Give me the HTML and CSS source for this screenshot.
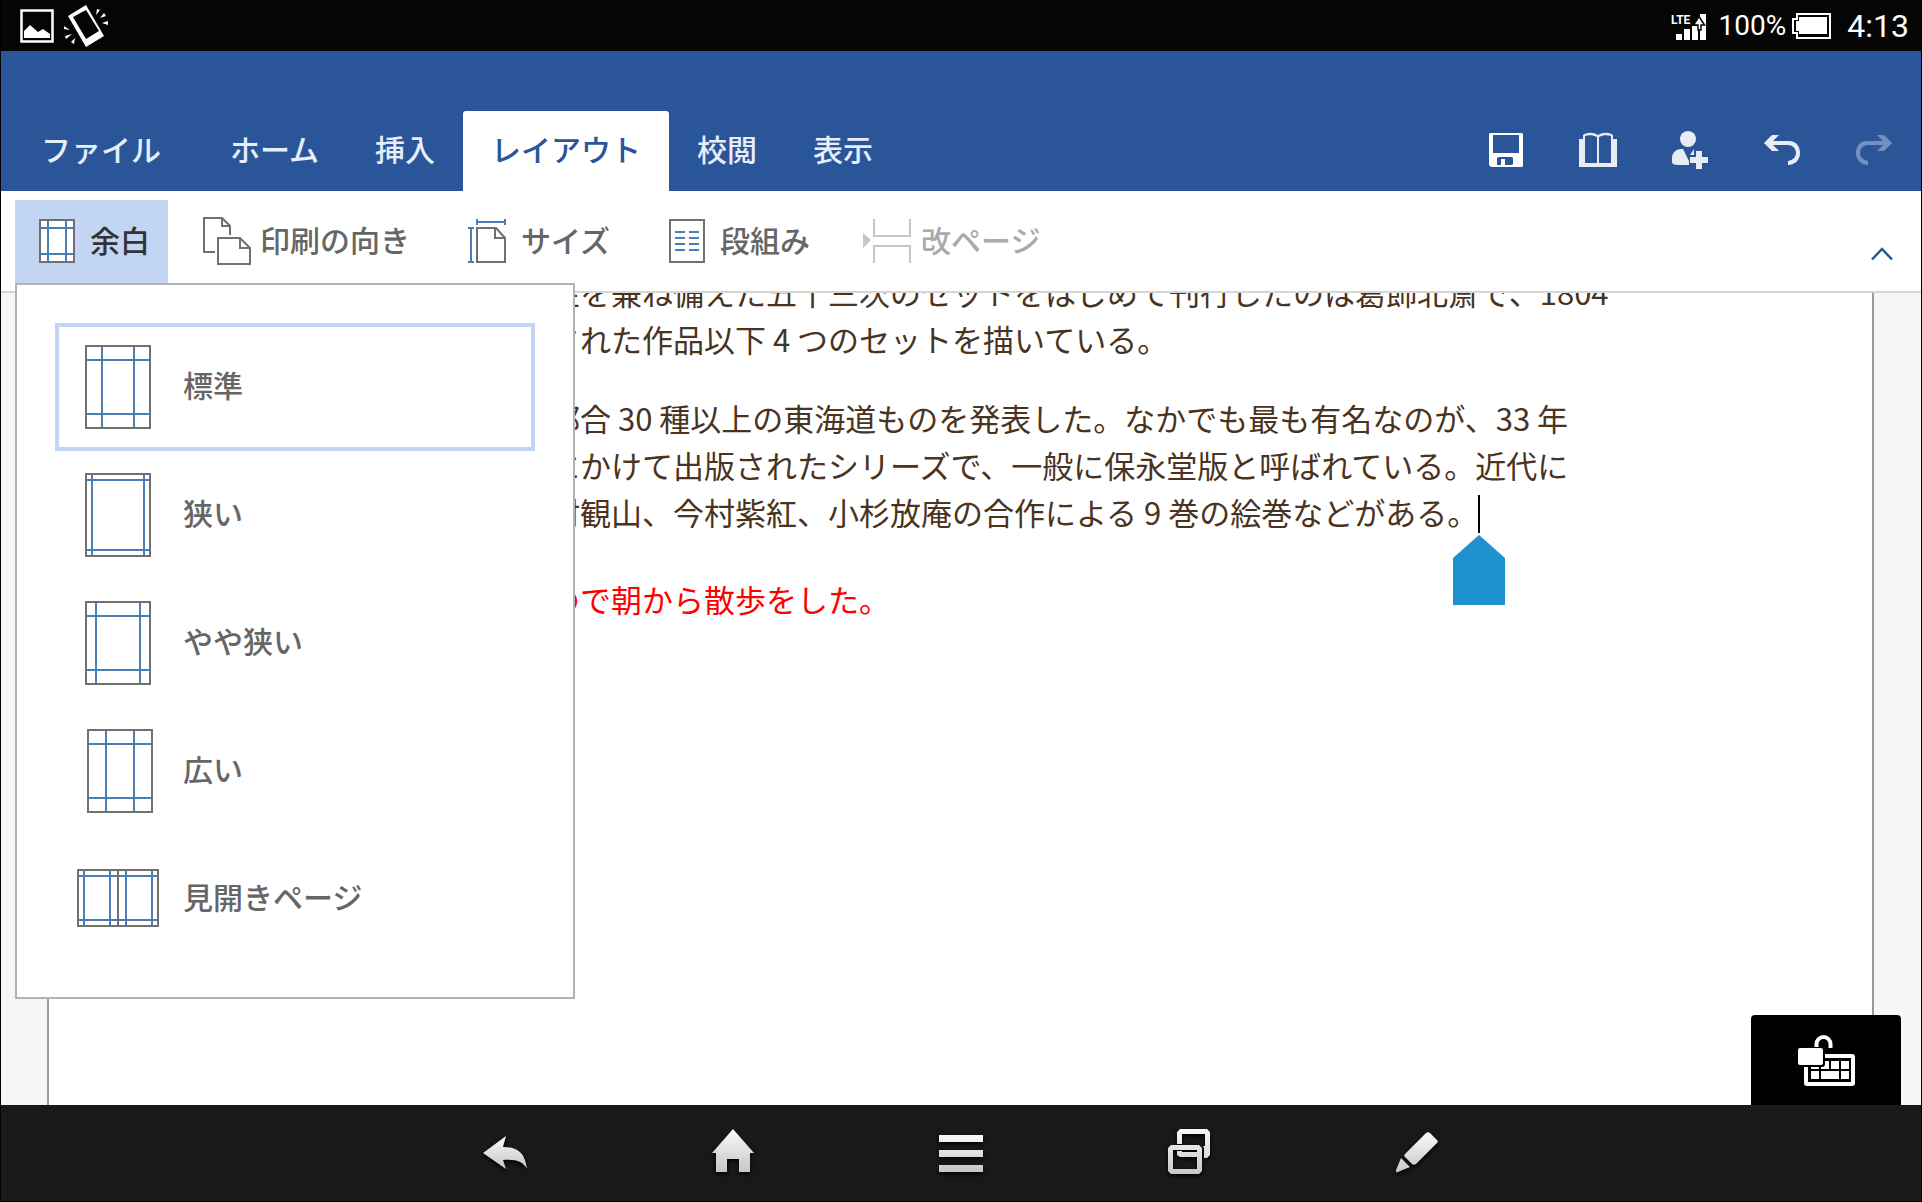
FILE: index.html
```html
<!DOCTYPE html>
<html lang="ja">
<head>
<meta charset="utf-8">
<meta name="viewport" content="width=device-width, initial-scale=1">
<title>レイアウト</title>
<link rel="stylesheet" href="styles.css">
</head>
<body>
<div class="status">
  <div class="status-group">
    <svg width="34" height="34" viewBox="0 0 34 34"><path d="M1.500 1.500h31v31h-31z" fill="none" stroke="#fff" stroke-width="2.500"/><path d="M4 29v-7l6-6 8 7 5-3 7 5v4z" fill="#fff"/></svg>
    <svg width="44" height="42" viewBox="0 0 44 42"><path d="M4 11 22 0l18 31-18 11zM9 12l13 22 13-8L22 5z" fill="#fff" fill-rule="evenodd"/><path d="M32 10l1-6 3 1zM36 13l4-5 2 3zM38 18l6-2v4zM6 25l-6-1v-3zM8 29l-6 5-1-3zM11 33l-1 6-3-2z" fill="#fff"/></svg>
  </div>
  <div class="status-group status-right">
    <svg class="signal" width="36" height="28" viewBox="0 0 36 28"><path d="M5 22h6v6H5zM13 17h6v11h-6zM21 14h6v14h-6zM29 2h6v26h-6z" fill="#fff"/><path d="M22.500 13 28 4.500l5.500 8.500h-3.500v5h-3v-5z" fill="#fff" stroke="#050505" stroke-width="1.500"/><text x="0" y="12" class="lte">LTE</text></svg>
    <span class="percent">100%</span>
    <svg class="battery" width="39" height="26" viewBox="0 0 39 26"><path d="M5 1h33v24H5v-5H1V6h4z" fill="none" stroke="#fff" stroke-width="2"/><path d="M7 4h28v17H7v-3H4V8h3z" fill="#fff"/></svg>
    <span class="clock">4:13</span>
  </div>
</div>

<header class="header">
  <nav class="tabs">
    <button class="tab tab-file">ファイル</button>
    <button class="tab">ホーム</button>
    <button class="tab">挿入</button>
    <button class="tab tab-active">レイアウト</button>
    <button class="tab">校閲</button>
    <button class="tab">表示</button>
  </nav>
  <div class="actions">
    <button class="action" aria-label="保存"><svg width="34" height="34" viewBox="0 0 34 34"><path fill="#fff" fill-rule="evenodd" d="M1 0h32l1 1v32l-1 1H2l-2-2V1zM4 2v18h26V2zM10 24l-2 1v7h4v-6h4v6h7l1-1v-6l-1-1z"/></svg></button>
    <button class="action" aria-label="閲覧"><svg width="38" height="34" viewBox="0 0 38 34"><path fill="#e8edf5" fill-rule="evenodd" d="M0 6h4V2c4-3 10-3 15 0 5-3 11-3 15 0v4h4v28H0zM6 3v27h12V4c-4-2-8-2-12-1zM20 4v26h12V3c-4-1-8-1-12 1z"/></svg></button>
    <button class="action" aria-label="共有"><svg width="36" height="38" viewBox="0 0 36 38"><g fill="#e8edf5"><circle cx="16" cy="8" r="8"/><path d="M9 18h2l6 12v4H6c-4 0-6-1-6-3v-4c0-5 4-9 9-9zM22 18l-4 6h4z"/><path d="M24 20h6v6h6v6h-6v6h-6v-6h-6v-6h6z"/></g></svg></button>
    <button class="action" aria-label="元に戻す"><svg width="36" height="30" viewBox="0 0 36 30"><path fill="#e8edf5" d="M0 8 8 0h7L9 6h16c7 0 11 5 11 12s-5 12-12 12v-4c5-1 8-4 8-8s-3-8-8-8H9l6 6H8z"/></svg></button>
    <button class="action" aria-label="やり直し" disabled><svg width="36" height="30" viewBox="0 0 36 30"><path fill="#7391bd" d="M36 8 28 0h-7l6 6H11C4 6 0 11 0 18s5 12 12 12v-4c-5-1-8-4-8-8s3-8 8-8h15l-6 6h7z"/></svg></button>
  </div>
</header>

<div class="ribbon">
  <div class="menu-anchor">
    <button class="tool tool-open" aria-expanded="true">
      <svg width="36" height="44" viewBox="0 0 36 44"><path fill="#fff" d="M0 0h36v44H0z"/><path class="guide" d="M9 1v42M27 1v42M1 9h34M1 35h34"/><path class="edge" d="M1 1h34v42H1z"/></svg>
      <span class="label">余白</span>
    </button>
    <div class="menu">
      <button class="choice choice-current"><span class="choice-icon"><svg width="66" height="84" viewBox="0 0 66 84"><path class="guide" d="M17 1v82M49 1v82M1 15h64M1 69h64"/><path class="edge" d="M1 1h64v82H1z"/></svg></span><span class="label">標準</span></button>
      <button class="choice"><span class="choice-icon"><svg width="66" height="84" viewBox="0 0 66 84"><path class="guide" d="M7 1v82M59 1v82M1 7h64M1 77h64"/><path class="edge" d="M1 1h64v82H1z"/></svg></span><span class="label">狭い</span></button>
      <button class="choice"><span class="choice-icon"><svg width="66" height="84" viewBox="0 0 66 84"><path class="guide" d="M11 1v82M55 1v82M1 15h64M1 69h64"/><path class="edge" d="M1 1h64v82H1z"/></svg></span><span class="label">やや狭い</span></button>
      <button class="choice"><span class="choice-icon"><svg width="70" height="84" viewBox="0 0 70 84"><path class="guide" d="M23 1v82M51 1v82M5 15h64M5 69h64"/><path class="edge" d="M5 1h64v82H5z"/></svg></span><span class="label">広い</span></button>
      <button class="choice"><span class="choice-icon"><svg width="82" height="60" viewBox="0 0 82 60"><path class="guide" d="M7 1v56M33 1v56M49 1v56M75 1v56M1 7h80M1 51h80"/><path class="edge" d="M41 1v56M1 1h80v56H1z"/></svg></span><span class="label">見開きページ</span></button>
    </div>
  </div>
  <button class="tool tool-orientation">
    <svg width="48" height="48" viewBox="0 0 48 48"><path class="edge" d="M12 35H1V1h18l8 8v9M19 1v8h8M15 21h22l10 10v16H15zM37 21v10h10"/></svg>
    <span class="label">印刷の向き</span>
  </button>
  <button class="tool tool-size">
    <svg width="38" height="44" viewBox="0 0 38 44"><path class="guide" d="M9 0v6M37 0v6M9 3h28M0 9h6M0 43h6M3 9v34"/><path class="edge" d="M9 9h19l9 10v24H9zM27 9v10h10"/></svg>
    <span class="label">サイズ</span>
  </button>
  <button class="tool">
    <svg width="36" height="44" viewBox="0 0 36 44"><path class="edge" d="M1 1h34v42H1z"/><path class="guide" d="M6 13h10M20 13h10M6 19h10M20 19h10M6 25h10M20 25h10M6 31h10M20 31h10"/></svg>
    <span class="label">段組み</span>
  </button>
  <button class="tool tool-break" disabled>
    <svg width="48" height="44" viewBox="0 0 48 44"><path fill="#c6c6c6" d="M0 14l8 7-8 8z"/><path fill="none" stroke="#c6c6c6" stroke-width="2" d="M11 0v17h36V0M11 44V27h36v17"/></svg>
    <span class="label">改ページ</span>
  </button>
  <button class="collapse" aria-label="リボンを閉じる"><svg width="22" height="14" viewBox="0 0 22 14"><path d="M1 12.500 11 2l10 10.500" fill="none" stroke="#2a5699" stroke-width="2.500"/></svg></button>
</div>

<main class="canvas">
  <article class="page">
    <p class="para">性を兼ね備えた五十三次のセットをはじめて刊行したのは葛飾北斎で、1804<br>された作品以下 4 つのセットを描いている。</p>
    <p class="para">都合 30 種以上の東海道ものを発表した。なかでも最も有名なのが、33 年<br>にかけて出版されたシリーズで、一般に保永堂版と呼ばれている。近代に<br>村観山、今村紫紅、小杉放庵の合作による 9 巻の絵巻などがある。<span class="caret"><svg class="handle" width="52" height="70" viewBox="0 0 52 70"><path fill="#1f91d1" d="M26 0 52 23v47H0V23z"/></svg></span></p>
    <p class="para para-red">ので朝から散歩をした。</p>
  </article>
  <button class="keyboard" aria-label="キーボード"><svg width="57" height="51" viewBox="0 0 57 51"><path d="M18.500 14V9a7 7 0 0 1 14 0v4" fill="none" stroke="#fff" stroke-width="4"/><rect x="6" y="19" width="51" height="32" rx="3" fill="#fff"/><path d="M10 23h43v24H10z"/><path fill="#fff" d="M13 26h8v8h-8zM23 26h8v8h-8zM33 26h8v8h-8zM43 26h8v8h-8zM13 36h8v8h-8zM23 36h18v8H23zM43 36h8v8h-8z"/><rect x="-1" y="12" width="28" height="20" rx="3"/><rect y="13" width="25" height="17" rx="2" fill="#fff"/></svg></button>
</main>

<nav class="system">
  <svg class="defs" width="0" height="0"><defs><linearGradient id="metal" x1="0" y1="0" x2="0" y2="1"><stop offset="0" stop-color="#fafafa"/><stop offset="1" stop-color="#c6c6c6"/></linearGradient></defs></svg>
  <button class="key" aria-label="戻る"><svg width="44" height="46" viewBox="0 0 44 46"><path fill="url(#metal)" d="M0 24 23 7l-3 11c14 0 22 5 24 22-4-7-10-10-24-9l3 9z"/></svg></button>
  <button class="key" aria-label="ホーム"><svg width="42" height="46" viewBox="0 0 42 46"><path fill="url(#metal)" d="M21 0l21 24h-4v19H27V30H15v13H4V24H0z"/></svg></button>
  <button class="key" aria-label="メニュー"><svg width="44" height="46" viewBox="0 0 44 46"><path fill="url(#metal)" d="M0 6h44v7H0zM0 21h44v7H0zM0 36h44v7H0z"/></svg></button>
  <button class="key" aria-label="最近使ったアプリ"><svg width="42" height="46" viewBox="0 0 42 46"><path fill="url(#metal)" fill-rule="evenodd" d="M12 0h27l3 3v23l-3 3h-3V19l-1-2h2V5H14v10H9V3zM3 16h28l3 3v23l-3 3H3l-3-3V19zM5 21v19h24V28H12l-3-2v-4h5v1h15v-2z"/></svg></button>
  <button class="key" aria-label="ペン"><svg width="42" height="46" viewBox="0 0 42 46"><path fill="url(#metal)" d="M30 4c1-1 3-1 4 0l7 7c1 1 1 2 0 3L20 35c-1 1-3 1-4 0l-7-7c-1-1-1-2 0-3zM5 29l9 9-12 5c-2 1-2 0-2-2z"/></svg></button>
</nav>
</body>
</html>
```

FILE: styles.css
```css
* { box-sizing: border-box; }

body {
  margin: 0;
  min-height: 100vh;
  border: 1px solid #000;
  border-top: 0;
  display: flex;
  flex-direction: column;
  background: #fff;
  font-family: "Noto Sans CJK JP", sans-serif;
  font-size: 30px;
  font-weight: 500;
}

svg { display: block; flex: none; overflow: visible; }

button {
  margin: 0;
  padding: 0;
  border: 0;
  background: none;
  color: inherit;
  font: inherit;
}

.edge { fill: none; stroke: #707070; stroke-width: 2; }
.guide { fill: none; stroke: #4a7ebb; stroke-width: 2; }
.label { padding-bottom: 4px; }

/* Android status bar */
.status {
  height: 51px;
  padding: 0 12px 0 19px;
  display: flex;
  justify-content: space-between;
  align-items: center;
  background: #050505;
  color: #fff;
  font-family: Roboto, sans-serif;
  font-weight: 400;
}
.status-group { display: flex; align-items: center; gap: 10px; }
.status-right { gap: 0; }
.lte { fill: #fff; font: 700 12px Roboto, sans-serif; }
.percent { margin: 0 6px 0 12px; font-size: 28px; line-height: 50px; }
.clock { margin-left: 16px; font-size: 32px; line-height: 50px; }

/* App header with the ribbon tabs */
.header {
  height: 140px;
  padding-right: 1px;
  display: flex;
  justify-content: space-between;
  align-items: flex-end;
  background: #2a5699;
  color: #e6eefb;
}
.tabs { display: flex; }
.tab { height: 80px; padding: 0 28px 6px; }
.tab-file { padding-left: 40px; padding-right: 41px; }
.tab-active { background: #fff; color: #2a5699; border-radius: 3px 3px 0 0; }
.actions { display: flex; height: 80px; padding-bottom: 2px; }
.action { width: 92px; display: flex; align-items: center; justify-content: center; }

/* Layout tools */
.ribbon {
  height: 102px;
  padding: 9px 28px 0 14px;
  display: flex;
  border-bottom: 2px solid #d6d6d6;
  color: #666;
}
.menu-anchor { position: relative; height: 83px; }
.tool {
  height: 83px;
  margin-right: 34px;
  padding: 0 0 2px 24px;
  display: flex;
  align-items: center;
  gap: 15px;
}
.tool-open { margin-right: 11px; padding-right: 18px; background: #c2d5f2; color: #333; }
.tool-orientation { gap: 9px; }
.tool-size { margin-right: 35px; }
.tool-break { gap: 10px; margin-left: -5px; color: #aaa; }
.collapse { margin: 47px 0 0 auto; align-self: flex-start; }

/* Margin presets */
.menu {
  position: absolute;
  z-index: 2;
  top: 100%;
  left: 0;
  width: 560px;
  padding: 38px 38px 34px;
  border: 2px solid #b3b3b3;
  background: #fff;
}
.choice {
  width: 100%;
  height: 128px;
  padding-left: 18px;
  display: flex;
  align-items: center;
  gap: 24px;
  border: 4px solid transparent;
}
.choice .label { padding-bottom: 6px; }
.choice-current { border-color: #c2d5f2; }
.choice-icon { width: 82px; display: flex; justify-content: center; }

/* Document */
.canvas {
  position: relative;
  flex: 1;
  display: flex;
  padding: 0 47px 0 46px;
  overflow: hidden;
  background: #f6f6f6;
}
.page {
  flex: 1;
  padding-left: 500px;
  border: solid #999;
  border-width: 0 2px;
  background: #fff;
  color: #4a3320;
  font-size: 31px;
  font-weight: 400;
  line-height: 47px;
  white-space: nowrap;
}
.para { margin: 0 0 32px; }
.para:first-child { margin-top: -25px; }
.para-red { margin-top: 40px; color: #f00; }
.caret {
  position: relative;
  display: inline-block;
  width: 2px;
  height: 38px;
  margin: -4px 0 0;
  vertical-align: -8px;
  background: #000;
}
.handle { position: absolute; top: 40px; left: -25px; }

.keyboard {
  position: absolute;
  right: 20px;
  bottom: 0;
  width: 150px;
  height: 90px;
  display: flex;
  align-items: center;
  justify-content: center;
  border-radius: 4px 4px 0 0;
  background: #000;
}

/* Android navigation keys */
.system {
  height: 96px;
  padding-bottom: 2px;
  display: flex;
  justify-content: center;
  background: #191919;
}
.defs { position: absolute; }
.key { width: 228px; display: flex; align-items: center; justify-content: center; filter: drop-shadow(0 2px 2px #000); }
```
